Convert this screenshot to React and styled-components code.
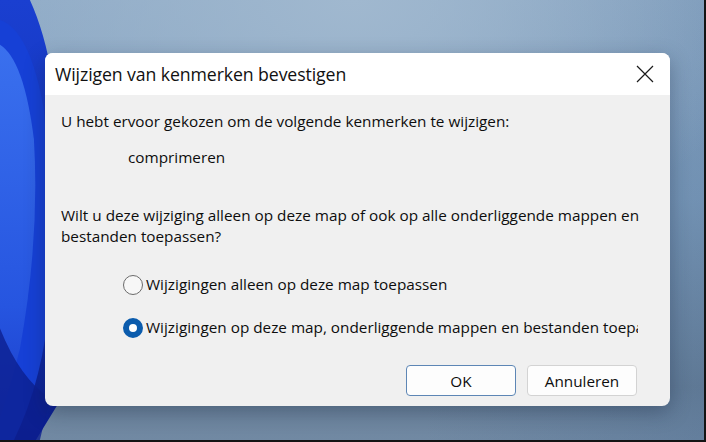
import React, { useState } from "react"
import styled, { createGlobalStyle } from "styled-components"

const GlobalStyle = createGlobalStyle`
  html, body {
    margin: 0;
    padding: 0;
    background: #111;
  }
  * {
    box-sizing: border-box;
  }
`

const Desktop = styled.div`
  position: relative;
  width: 706px;
  height: 442px;
  overflow: hidden;
  padding: 53px 0 0 45px;
  background:
    linear-gradient(90deg, rgba(0, 0, 0, 0) 60%, rgba(40, 80, 130, 0.18) 100%),
    linear-gradient(180deg, #8eaac6 0%, #819fbd 45%, #6a8199 88%, #7189a3 100%);
  border-right: 2px solid #141414;
  border-bottom: 2px solid #141414;
  font-family: "Open Sans", "Noto Sans", sans-serif;
`

const Wallpaper = styled.svg`
  position: absolute;
  inset: 0;
  width: 100%;
  height: 100%;
`

const Dialog = styled.div`
  position: relative;
  width: 625px;
  height: 353px;
  border-radius: 8px;
  overflow: hidden;
  display: flex;
  flex-direction: column;
  background: #f0f0f0;
  box-shadow: 0 6px 20px rgba(20, 35, 60, 0.35);
`

const TitleBar = styled.div`
  height: 42px;
  flex: none;
  display: flex;
  align-items: center;
  justify-content: space-between;
  padding: 0 16px 0 10px;
  background: #ffffff;
`

const Title = styled.span`
  font-size: 17.7px;
  color: #111;
  letter-spacing: -0.1px;
`

const CloseButton = styled.button`
  border: 0;
  background: transparent;
  padding: 0;
  width: 18px;
  height: 18px;
  display: flex;
  align-items: center;
  justify-content: center;
  cursor: pointer;
`

const Body = styled.div`
  flex: 1;
  display: flex;
  flex-direction: column;
  padding: 16px 32px 10px 16px;
  font-size: 15.3px;
  line-height: 21px;
  color: #0d0d0d;
`

const Text = styled.p`
  margin: ${({ $top }) => $top || 0}px 0 0;
  padding-left: ${({ $indent }) => $indent || 0}px;
  white-space: nowrap;
`

const Options = styled.div`
  display: flex;
  flex-direction: column;
  gap: 22px;
  margin-top: 27px;
  padding-left: 62px;
  overflow: hidden;
`

const Option = styled.label`
  display: flex;
  align-items: center;
  gap: 3px;
  white-space: nowrap;
  cursor: pointer;
`

const RadioDot = styled.span`
  flex: none;
  width: 20px;
  height: 20px;
  border-radius: 50%;
  background: ${({ $on }) => ($on ? "#ffffff" : "#f7f7f7")};
  border: ${({ $on }) => ($on ? "6px solid #0b5cad" : "1px solid #6b6b6b")};
`

const Footer = styled.div`
  margin-top: auto;
  display: flex;
  justify-content: flex-end;
  gap: 11px;
  margin-right: 1px;
`

const Button = styled.button`
  width: 110px;
  height: 31px;
  border-radius: 4px;
  background: #fdfdfd;
  border: 1px solid ${({ $primary }) => ($primary ? "#5d86b5" : "#d3d3d3")};
  font-family: inherit;
  font-size: 15.3px;
  color: #0d0d0d;
`

export default function App() {
  const [choice, setChoice] = useState(1)
  const options = [
    "Wijzigingen alleen op deze map toepassen",
    "Wijzigingen op deze map, onderliggende mappen en bestanden toepassen",
  ]

  return (
    <>
      <GlobalStyle />
      <Desktop>
        <Wallpaper viewBox="0 0 706 442" preserveAspectRatio="none">
          <defs>
            <radialGradient id="glow" cx="0.5" cy="0.0" r="0.6">
              <stop offset="0" stopColor="#a0b8cf" />
              <stop offset="1" stopColor="#a0b8cf" stopOpacity="0" />
            </radialGradient>
            <linearGradient id="bloomA" x1="0" y1="0" x2="0" y2="1">
              <stop offset="0" stopColor="#1a3fd0" />
              <stop offset="0.6" stopColor="#1232b8" />
              <stop offset="1" stopColor="#0a1c8c" />
            </linearGradient>
            <linearGradient id="bloomB" x1="0" y1="0" x2="0" y2="1">
              <stop offset="0" stopColor="#3a70ee" />
              <stop offset="0.7" stopColor="#2655e0" />
              <stop offset="1" stopColor="#1b3fcc" />
            </linearGradient>
          </defs>
          <rect width="706" height="442" fill="url(#glow)" />
          <path d="M0 0 L30 0 Q62 70 60 200 Q60 330 58 406 L36 442 L0 442 Z" fill="url(#bloomA)" />
          <path d="M0 20 Q30 30 44 110 Q52 200 50 300 Q44 380 14 442 L0 442 Z" fill="#1640d6" />
          <path d="M0 45 Q24 60 34 140 Q40 240 20 350 Q10 390 0 420 Z" fill="url(#bloomB)" />
          <path d="M0 330 Q20 380 50 400 L40 442 L0 442 Z" fill="#0c1f90" opacity="0.8" />
        </Wallpaper>
        <Dialog>
          <TitleBar>
            <Title>Wijzigen van kenmerken bevestigen</Title>
            <CloseButton aria-label="Sluiten">
              <svg width="18" height="18" viewBox="0 0 18 18">
                <path d="M1 1 L17 17 M17 1 L1 17" stroke="#1b1b1b" strokeWidth="1.2" />
              </svg>
            </CloseButton>
          </TitleBar>
          <Body>
            <Text>U hebt ervoor gekozen om de volgende kenmerken te wijzigen:</Text>
            <Text $top={15} $indent={67}>comprimeren</Text>
            <Text $top={37}>
              Wilt u deze wijziging alleen op deze map of ook op alle onderliggende mappen en
              <br />
              bestanden toepassen?
            </Text>
            <Options>
              {options.map((label, i) => (
                <Option key={label} onClick={() => setChoice(i)}>
                  <RadioDot $on={choice === i} />
                  {label}
                </Option>
              ))}
            </Options>
            <Footer>
              <Button $primary>OK</Button>
              <Button>Annuleren</Button>
            </Footer>
          </Body>
        </Dialog>
      </Desktop>
    </>
  )
}
